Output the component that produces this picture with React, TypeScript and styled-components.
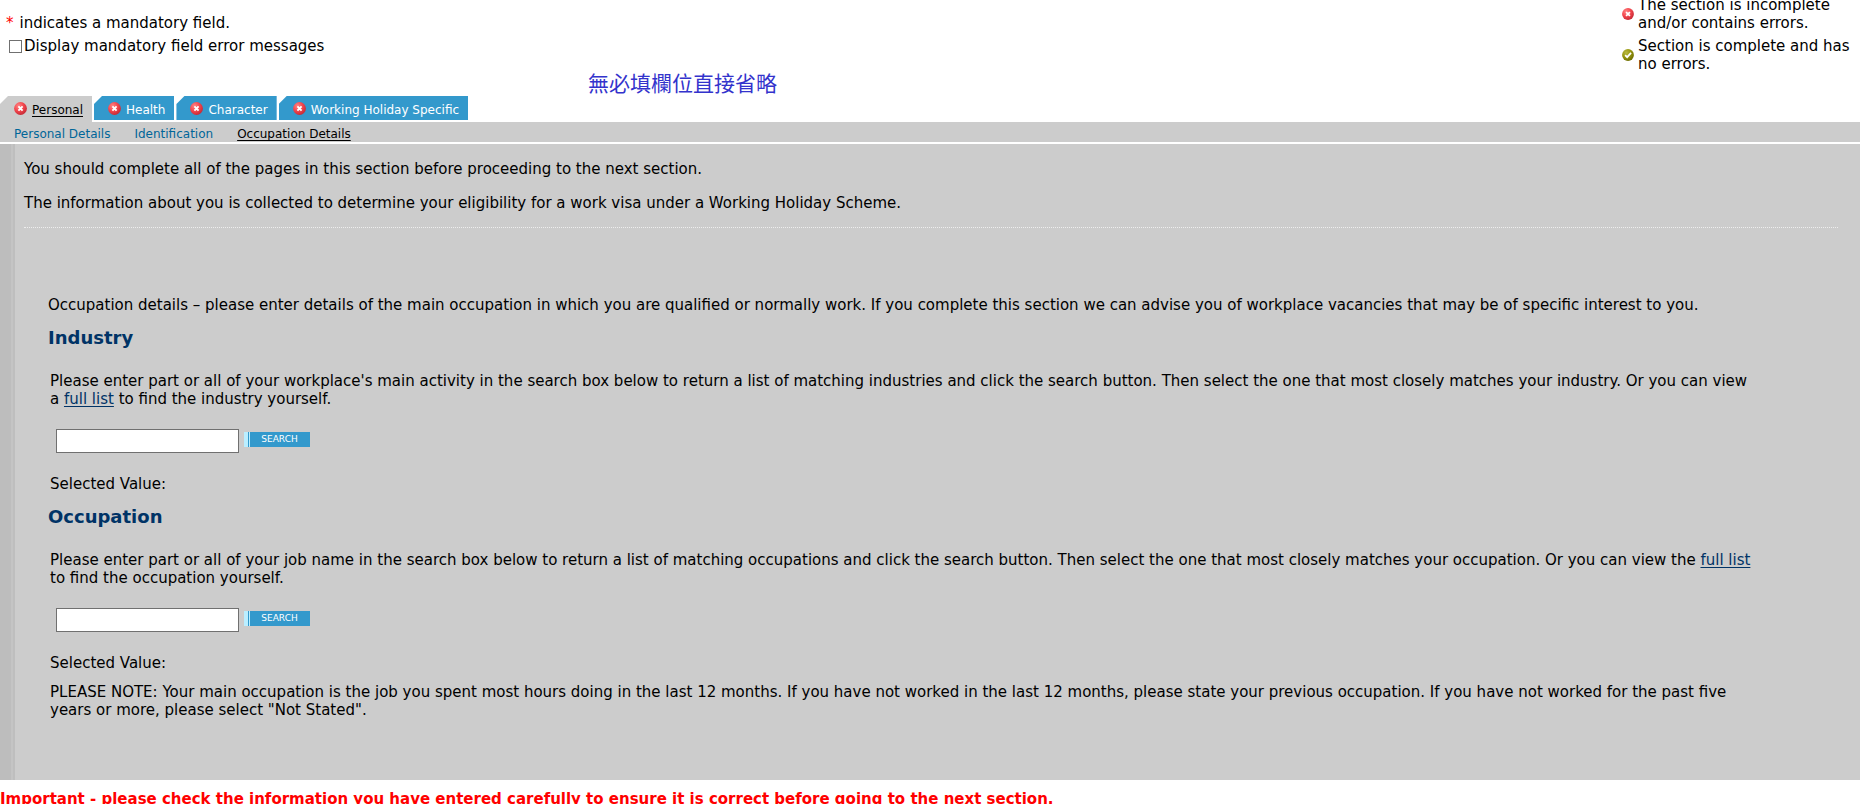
import React, { useId } from "react";
import styled, { createGlobalStyle } from "styled-components";

const GlobalStyle = createGlobalStyle`
  *, *::before, *::after { box-sizing: border-box; }
  body {
    margin: 0;
    background: #fff;
    color: #000;
    font-family: Verdana, "DejaVu Sans", "Noto Sans CJK TC", sans-serif;
    font-size: 15px;
    line-height: 18px;
  }
  p, h2 { margin: 0; }
`;

const Page = styled.div`
  height: 100vh;
  overflow: hidden;
`;

const Header = styled.header`
  position: relative;
  display: flex;
  justify-content: space-between;
  align-items: flex-end;
  height: 73px;
  padding-right: 14px;
`;

const Mandatory = styled.div`
  display: flex;
  flex-direction: column;
  gap: 5px;
  padding: 0 0 18px 6px;
`;

const Star = styled.span`
  color: #f00;
  margin-right: 6px;
`;

const CheckLabel = styled.label`
  display: flex;
  align-items: center;
  gap: 2px;
  padding-left: 3px;
`;

const Checkbox = styled.input`
  appearance: none;
  width: 13px;
  height: 13px;
  margin: 0;
  border: 1px solid #707070;
  background: #fff;
  &:checked { background: #3399cc; }
`;

const Legend = styled.ul`
  list-style: none;
  margin: 0;
  padding: 0;
  width: 238px;
  display: flex;
  flex-direction: column;
  gap: 5px;
`;

const LegendItem = styled.li`
  display: flex;
  align-items: center;
  gap: 4px;
  svg { flex: none; }
`;

const Annotation = styled.p`
  position: absolute;
  left: 588px;
  top: 68px;
  color: #3333cc;
  font-family: "Noto Sans CJK TC", sans-serif;
  font-size: 21px;
  line-height: 28px;
`;

const Tabs = styled.nav`
  display: flex;
  align-items: flex-start;
  gap: 2px;
  margin-top: 23px;
  font-size: 12px;
`;

const Tab = styled.a<{ $active?: boolean }>`
  display: flex;
  align-items: center;
  gap: 5px;
  height: ${(p) => (p.$active ? 26 : 24)}px;
  padding: ${(p) => (p.$active ? "0 9px 1px 14px" : "1px 9px 0 14px")};
  background: ${(p) => (p.$active ? "#cccccc" : "#3399cc")};
  color: ${(p) => (p.$active ? "#000" : "#fff")};
  text-decoration: ${(p) => (p.$active ? "underline" : "none")};
  text-underline-offset: 2px;
  clip-path: polygon(8px 0, 100% 0, 100% 100%, 0 100%, 0 8px);
  span { padding-top: 3px; }
`;

const SubNav = styled.nav`
  display: flex;
  align-items: center;
  gap: 24px;
  height: 20px;
  margin-right: 14px;
  padding: 4px 14px 0;
  background: #cccccc;
  font-size: 12px;
`;

const SubLink = styled.a<{ $active?: boolean }>`
  color: ${(p) => (p.$active ? "#000" : "#006699")};
  text-decoration: ${(p) => (p.$active ? "underline" : "none")};
  text-underline-offset: 2px;
`;

const Panel = styled.main`
  margin: 2px 14px 0 0;
  padding: 16px 22px 61px 9px;
  background: #cccccc;
  border-left: 15px solid transparent;
  background-image: linear-gradient(
    to right, #bdbdbd 11px, #c4c4c4 11px, #c4c4c4 13px, #bebebe 13px, #bebebe 15px, #cccccc 15px
  );
  background-origin: border-box;
`;

const Intro = styled.div`
  display: flex;
  flex-direction: column;
  gap: 16px;
  padding-bottom: 15px;
  border-bottom: 1px dotted #eeeeee;
`;

const Details = styled.div`
  padding: 68px 83px 0 24px;
`;

const Section = styled.section`
  padding-top: 13px;
`;

const Heading = styled.h2`
  color: #003366;
  font-size: 18px;
  line-height: 22px;
`;

const SectionBody = styled.div`
  padding: 23px 0 0 2px;
`;

const Link = styled.a`
  color: #003366;
  text-underline-offset: 2px;
`;

const SearchRow = styled.form`
  display: flex;
  align-items: flex-start;
  gap: 5px;
  padding: 21px 0 22px 6px;
`;

const SearchInput = styled.input`
  width: 183px;
  height: 24px;
  border: 1px solid #707070;
  background: #fff;
  font: inherit;
`;

const SearchButton = styled.button`
  width: 66px;
  height: 15px;
  margin-top: 3px;
  padding: 0 0 0 5px;
  border: 0;
  background: linear-gradient(
    to right, #bbeeff 4px, #3399cc 4px, #3399cc 5px, #bbeeff 5px, #bbeeff 6px, #3399cc 6px
  );
  color: #fff;
  font-family: "DejaVu Sans", sans-serif;
  font-size: 9px;
  line-height: 15px;
`;

const Note = styled.p`
  padding: 11px 0 0 2px;
`;

const Important = styled.p`
  padding-top: 10px;
  color: #f00;
  font-weight: bold;
`;

function ErrorIcon({ size = 13 }: { size?: number }) {
  const id = useId();
  return (
    <svg width={size} height={size} viewBox="0 0 13 13" aria-hidden="true">
      <defs>
        <radialGradient id={id} cx="0.35" cy="0.3" r="0.75">
          <stop offset="0" stopColor="#ff8585" />
          <stop offset="0.5" stopColor="#f4484f" />
          <stop offset="1" stopColor="#c42834" />
        </radialGradient>
      </defs>
      <circle cx="6.5" cy="6.5" r="6.4" fill={`url(#${id})`} />
      <path d="M4.4 4.4 8.6 8.6M8.6 4.4 4.4 8.6" stroke="#fff" strokeWidth="1.9" />
    </svg>
  );
}

function CompleteIcon() {
  const id = useId();
  return (
    <svg width="12" height="12" viewBox="0 0 13 13" aria-hidden="true">
      <defs>
        <radialGradient id={id} cx="0.35" cy="0.3" r="0.75">
          <stop offset="0" stopColor="#b8b840" />
          <stop offset="0.5" stopColor="#989810" />
          <stop offset="1" stopColor="#6c6c00" />
        </radialGradient>
      </defs>
      <circle cx="6.5" cy="6.5" r="6.4" fill={`url(#${id})`} />
      <path d="M3.4 6.6 5.6 8.8 9.8 4.2" fill="none" stroke="#fff" strokeWidth="1.9" />
    </svg>
  );
}

function Search({ label }: { label: string }) {
  return (
    <SearchRow onSubmit={(e) => e.preventDefault()}>
      <SearchInput type="text" aria-label={label} />
      <SearchButton type="submit">SEARCH</SearchButton>
    </SearchRow>
  );
}

const tabs = ["Personal", "Health", "Character", "Working Holiday Specific"];
const pages = ["Personal Details", "Identification", "Occupation Details"];

export default function App() {
  return (
    <Page>
      <GlobalStyle />
      <Header>
        <Mandatory>
          <p><Star>*</Star>indicates a mandatory field.</p>
          <CheckLabel>
            <Checkbox type="checkbox" />
            Display mandatory field error messages
          </CheckLabel>
        </Mandatory>
        <Annotation>無必填欄位直接省略</Annotation>
        <Legend>
          <LegendItem>
            <ErrorIcon size={12} />
            <span>The section is incomplete and/or contains errors.</span>
          </LegendItem>
          <LegendItem>
            <CompleteIcon />
            <span>Section is complete and has no errors.</span>
          </LegendItem>
        </Legend>
      </Header>
      <Tabs>
        {tabs.map((name, i) => (
          <Tab key={name} href="#" $active={i === 0}>
            <ErrorIcon />
            <span>{name}</span>
          </Tab>
        ))}
      </Tabs>
      <SubNav>
        {pages.map((name, i) => (
          <SubLink key={name} href="#" $active={i === 2}>{name}</SubLink>
        ))}
      </SubNav>
      <Panel>
        <Intro>
          <p>You should complete all of the pages in this section before proceeding to the next section.</p>
          <p>The information about you is collected to determine your eligibility for a work visa under a Working Holiday Scheme.</p>
        </Intro>
        <Details>
          <p>
            Occupation details – please enter details of the main occupation in which you are qualified or normally work. If you complete this section we can advise you of workplace vacancies that may be of specific interest to you.
          </p>
          <Section>
            <Heading>Industry</Heading>
            <SectionBody>
              <p>
                Please enter part or all of your workplace's main activity in the search box below to return a list of matching industries and click the search button. Then select the one that most closely matches your industry. Or you can view a <Link href="#">full list</Link> to find the industry yourself.
              </p>
              <Search label="Industry search" />
              <p>Selected Value:</p>
            </SectionBody>
          </Section>
          <Section>
            <Heading>Occupation</Heading>
            <SectionBody>
              <p>
                Please enter part or all of your job name in the search box below to return a list of matching occupations and click the search button. Then select the one that most closely matches your occupation. Or you can view the <Link href="#">full list</Link> to find the occupation yourself.
              </p>
              <Search label="Occupation search" />
              <p>Selected Value:</p>
            </SectionBody>
          </Section>
          <Note>
            PLEASE NOTE: Your main occupation is the job you spent most hours doing in the last 12 months. If you have not worked in the last 12 months, please state your previous occupation. If you have not worked for the past five years or more, please select "Not Stated".
          </Note>
        </Details>
      </Panel>
      <Important>
        Important - please check the information you have entered carefully to ensure it is correct before going to the next section.
      </Important>
    </Page>
  );
}
